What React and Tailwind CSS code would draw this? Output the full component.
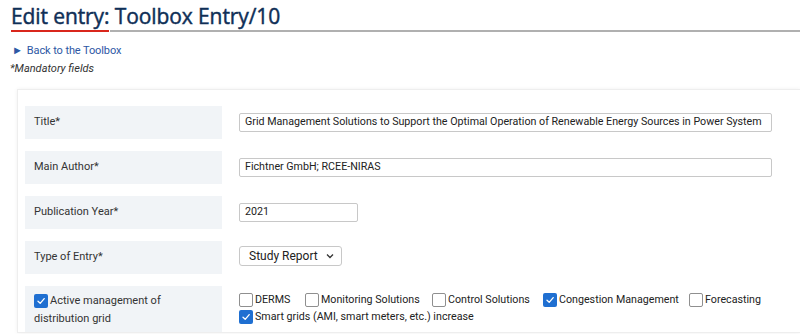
import React from 'react';

const Check = ({ checked }) => (
  <span
    className={
      checked
        ? 'inline-flex w-[14px] h-[14px] shrink-0 items-center justify-center rounded-[2px] bg-[#1f6fd1]'
        : 'inline-flex w-[14px] h-[14px] shrink-0 rounded-[2px] border border-[#8f8f8f] bg-white'
    }
  >
    {checked && (
      <svg width="10" height="10" viewBox="0 0 10 10" fill="none">
        <path d="M2 5.2L4.2 7.3L8.2 2.6" stroke="white" strokeWidth="1.3" strokeLinecap="round" strokeLinejoin="round" />
      </svg>
    )}
  </span>
);

const Row = ({ label, children, tall }) => (
  <div className="flex items-start">
    <div
      className={
        'w-[197px] shrink-0 bg-[#f1f4f7] px-[9px] text-[11px] text-[#333] ' +
        (tall ? 'h-[46px] pt-[6px] leading-[18px]' : 'h-[33px] flex items-center')
      }
    >
      {label}
    </div>
    <div className="flex-1 pl-[17px]">{children}</div>
  </div>
);

const TextBox = ({ value, w }) => (
  <div className={`${w} h-[19px] flex items-center border border-[#c8c8c8] rounded-[2px] bg-white px-[5px] text-[10.7px] text-[#222] whitespace-nowrap`}>
    {value}
  </div>
);

export default function App() {
  const opts = [
    ['DERMS', false, 'w-[66px]'],
    ['Monitoring Solutions', false, 'w-[127px]'],
    ['Control Solutions', false, 'w-[111px]'],
    ['Congestion Management', true, 'w-[146px]'],
    ['Forecasting', false, ''],
  ];

  return (
    <div className="w-[800px] h-[334px] overflow-hidden bg-white font-['Roboto',sans-serif]">
      <div className="flex items-end pt-[3px]">
        <h1 className="pl-[11px] text-[21px] leading-[27px] font-normal text-[#0f2f57] [-webkit-text-stroke:0.45px_#0f2f57] font-['Open_Sans',sans-serif] whitespace-nowrap tracking-[-0.1px]">
          <span className="border-b-2 border-[#d9261c]">Edit entry:</span> Toolbox Entry/10
        </h1>
      </div>
      <div className="h-[2px] bg-[#b0b0b0] ml-[110px]" />

      <div className="pl-[12px] pt-[12px] text-[11px] text-[#2d57a4] leading-[14px] tracking-[-0.1px]">
        <span className="text-[11px] mr-[4px]">►</span>Back to the Toolbox
      </div>
      <div className="pl-[10px] pt-[4px] text-[11px] italic text-[#333] leading-[14px]">*Mandatory fields</div>

      <div className="ml-[17px] mt-[13px] border border-[#eeeeee] border-r-0 shadow-[0_0_4px_rgba(0,0,0,0.06)] pl-[7px] pt-[16px] flex flex-col gap-[12px]">
        <Row label="Title*">
          <div className="pt-[7px]">
            <TextBox w="w-[533px]" value="Grid Management Solutions to Support the Optimal Operation of Renewable Energy Sources in Power System" />
          </div>
        </Row>
        <Row label="Main Author*">
          <div className="pt-[7px]">
            <TextBox w="w-[533px]" value="Fichtner GmbH; RCEE-NIRAS" />
          </div>
        </Row>
        <Row label="Publication Year*">
          <div className="pt-[7px]">
            <TextBox w="w-[119px]" value="2021" />
          </div>
        </Row>
        <Row label="Type of Entry*">
          <div className="pt-[5px]">
            <div className="w-[103px] h-[20px] flex items-center justify-between border border-[#c8c8c8] rounded-[3px] bg-white pl-[9px] pr-[7px] text-[12px] text-[#222]">
              Study Report
              <svg width="8" height="6" viewBox="0 0 8 6">
                <path d="M1 1.5L4 4.5L7 1.5" stroke="#333" strokeWidth="1.3" fill="none" />
              </svg>
            </div>
          </div>
        </Row>
        <Row
          tall
          label={
            <div>
              <div className="flex items-center gap-[2px]">
                <Check checked />
                <span>Active management of</span>
              </div>
              <div>distribution grid</div>
            </div>
          }
        >
          <div className="pt-[5px] text-[10.7px] text-[#222] leading-[17px]">
            <div className="flex items-center">
              {opts.map(([t, c, w]) => (
                <span key={t} className={`flex items-center gap-[2px] ${w}`}>
                  <Check checked={c} />
                  {t}
                </span>
              ))}
            </div>
            <div className="flex items-center gap-[2px]">
              <Check checked />
              Smart grids (AMI, smart meters, etc.) increase
            </div>
          </div>
        </Row>
      </div>
    </div>
  );
}
